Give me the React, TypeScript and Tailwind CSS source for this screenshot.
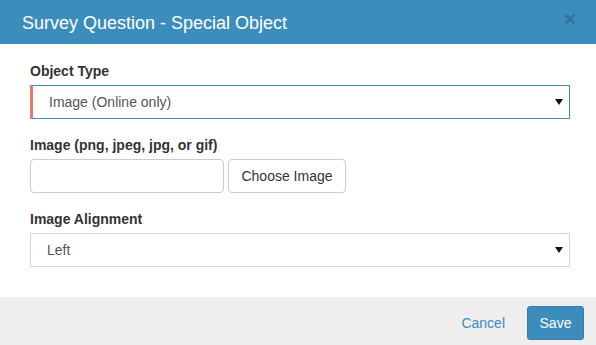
const font = { fontFamily: '"Liberation Sans", Arial, sans-serif' };

function Caret() {
  return (
    <svg width="8" height="6" viewBox="0 0 8 6" className="shrink-0">
      <path d="M0 0h8L4 6z" fill="#111" />
    </svg>
  );
}

function Label({ children }: { children: React.ReactNode }) {
  return (
    <div className="text-[14px] leading-[20px] font-bold text-[#333] mb-[4px]">
      {children}
    </div>
  );
}

export default function App() {
  return (
    <div className="w-[596px] h-[345px] bg-white overflow-hidden" style={font}>
      {/* header */}
      <div className="h-[44px] bg-[#3c8dbc] flex items-center justify-between pl-[22px] pr-[20px]">
        <h4 className="text-white text-[18px] leading-[20px] mt-[1px]">
          Survey Question - Special Object
        </h4>
        <span className="text-[#2b6c93] text-[21px] font-bold leading-none -mt-[8px] opacity-80">
          ×
        </span>
      </div>

      {/* body */}
      <div className="pl-[30px] pr-[26px] pt-[17px] pb-[30px]">
        <Label>Object Type</Label>
        <div className="h-[34px] flex items-center justify-between border border-[#3c8dbc] border-l-[3px] border-l-[#f2776b] pl-[16px] pr-[6px] text-[14px] text-[#555]">
          <span>Image (Online only)</span>
          <Caret />
        </div>

        <div className="mt-[16px]">
          <Label>Image (png, jpeg, jpg, or gif)</Label>
          <div className="flex gap-[4px]">
            <div className="w-[194px] h-[34px] border border-[#ccc] rounded-[4px]" />
            <button className="w-[118px] h-[34px] border border-[#ccc] rounded-[4px] bg-white text-[14px] text-[#333]">
              Choose Image
            </button>
          </div>
        </div>

        <div className="mt-[16px]">
          <Label>Image Alignment</Label>
          <div className="h-[34px] flex items-center justify-between border border-[#d2d6de] pl-[16px] pr-[6px] text-[14px] text-[#555]">
            <span>Left</span>
            <Caret />
          </div>
        </div>
      </div>

      {/* footer */}
      <div className="h-[48px] bg-[#eeeeee] flex items-start justify-end pt-[9px] pr-[12px] gap-[22px]">
        <span className="text-[14px] text-[#3c8dbc] leading-[34px]">Cancel</span>
        <button className="w-[57px] h-[34px] bg-[#3c8dbc] border border-[#367fa9] rounded-[3px] text-white text-[14px]">
          Save
        </button>
      </div>
    </div>
  );
}
